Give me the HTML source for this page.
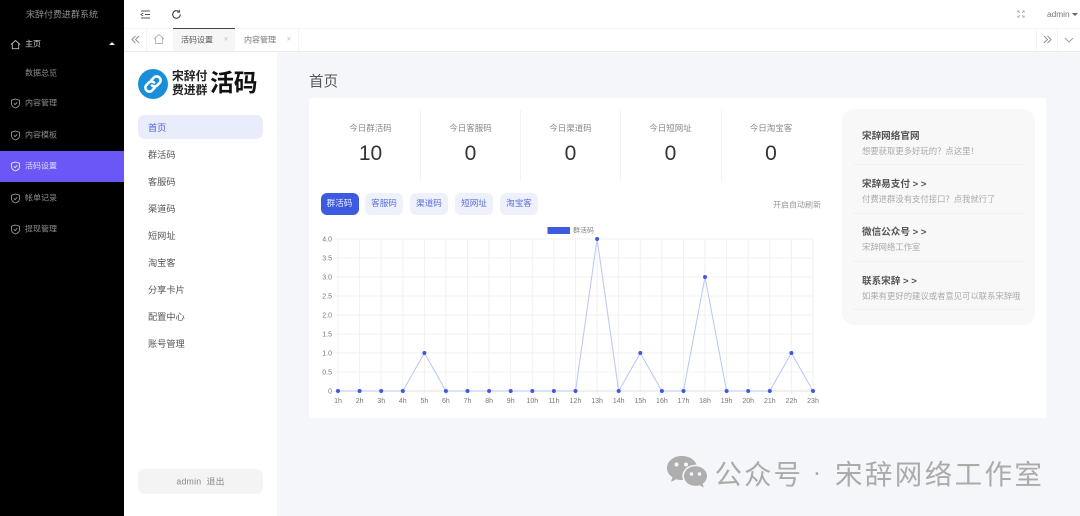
<!DOCTYPE html>
<html lang="zh-CN">
<head>
<meta charset="utf-8">
<title>宋辞付费进群系统</title>
<style>
*{box-sizing:border-box;margin:0;padding:0}
html,body{width:1080px;height:516px;overflow:hidden;background:#f5f6f9}
body{position:relative;font-family:"Liberation Sans","Noto Sans CJK SC",sans-serif}
#soft{position:absolute;left:0;top:0;width:1080px;height:516px;filter:blur(.35px)}
.a{position:absolute;white-space:nowrap}
.c{position:absolute;white-space:nowrap;transform:translate(-50%,-50%)}
.l{position:absolute;white-space:nowrap;transform:translateY(-50%)}
.side{position:absolute;left:0;top:0;width:124px;height:516px;background:#000}
.si{font-size:8px;color:#8c8c8c}
.mi{font-size:9.2px;color:#555;left:148px}
.sl{font-size:8.5px;color:#8a8a8a}
.num{font-size:21px;color:#333}
.dv{position:absolute;top:110px;width:1px;height:71px;background:#f3f3f4}
.btn{position:absolute;top:193px;height:22px;width:38px;border-radius:6px;background:#eef0fc;color:#5d70d8;font-size:8.6px;line-height:21.5px;text-align:center}
.pt{font-size:9.6px;color:#555;font-weight:bold;left:862px}
.ps{font-size:8.35px;color:#aaa;left:862px}
.pd{position:absolute;left:853px;width:171px;height:1px;background:#f1f1f1}
svg{position:absolute;overflow:visible}
</style>
</head>
<body>
<div id="soft">
<div class="side"></div>
<div class="c" style="left:62px;top:14px;font-size:9px;color:#8f8f8f">宋辞付费进群系统</div>

<svg style="left:10px;top:39px" width="11" height="11" viewBox="0 0 11 11" fill="none" stroke="#bbb" stroke-width=".9"><path d="M1 5.5L5.5 1.5L10 5.5M2.3 4.6V9.7H8.7V4.6"/></svg>
<div class="l si" style="left:25px;top:44px;color:#c8c8c8">主页</div>
<div class="a" style="left:109px;top:42px;border-left:3.5px solid transparent;border-right:3.5px solid transparent;border-bottom:3.5px solid #eee"></div>
<div class="l si" style="left:25px;top:73px">数据总览</div>

<div class="a" style="left:0;top:151px;width:124px;height:31px;background:#6a57f5"></div>

<svg style="left:10px;top:98px" width="11" height="11" viewBox="0 0 11 11" fill="none" stroke="#999" stroke-width=".9"><path d="M5.5 1L9.5 2.2V5.5C9.5 8 7.5 9.4 5.500 10C3.5 9.4 1.5 8 1.5 5.5V2.2ZM3.8 5.4L5.1 6.6L7.3 4.3"/></svg>
<div class="l si" style="left:25px;top:103px">内容管理</div>
<svg style="left:10px;top:130px" width="11" height="11" viewBox="0 0 11 11" fill="none" stroke="#999" stroke-width=".9"><path d="M5.5 1L9.5 2.2V5.5C9.5 8 7.5 9.4 5.5 10C3.5 9.4 1.5 8 1.5 5.5V2.2ZM3.8 5.4L5.1 6.6L7.3 4.3"/></svg>
<div class="l si" style="left:25px;top:135px">内容模板</div>
<svg style="left:10px;top:161px" width="11" height="11" viewBox="0 0 11 11" fill="none" stroke="#eee" stroke-width=".9"><path d="M5.5 1L9.5 2.2V5.5C9.5 8 7.5 9.4 5.5 10C3.5 9.4 1.5 8 1.5 5.5V2.2ZM3.8 5.4L5.1 6.6L7.3 4.3"/></svg>
<div class="l si" style="left:25px;top:166px;color:#e4e0ff">活码设置</div>
<svg style="left:10px;top:193px" width="11" height="11" viewBox="0 0 11 11" fill="none" stroke="#999" stroke-width=".9"><path d="M5.5 1L9.5 2.2V5.5C9.5 8 7.5 9.4 5.5 10C3.5 9.4 1.5 8 1.5 5.5V2.2ZM3.8 5.4L5.1 6.6L7.3 4.3"/></svg>
<div class="l si" style="left:25px;top:198px">帐单记录</div>
<svg style="left:10px;top:224px" width="11" height="11" viewBox="0 0 11 11" fill="none" stroke="#999" stroke-width=".9"><path d="M5.5 1L9.5 2.2V5.5C9.5 8 7.5 9.4 5.5 10C3.5 9.4 1.5 8 1.5 5.5V2.2ZM3.8 5.4L5.1 6.6L7.3 4.3"/></svg>
<div class="l si" style="left:25px;top:229px">提现管理</div>

<!-- top bar -->
<div class="a" style="left:124px;top:0;width:956px;height:52px;background:#fff;border-bottom:1px solid #e9e9ea"></div>
<div class="a" style="left:124px;top:27.5px;width:956px;height:1px;background:#f6f6f6"></div>
<svg style="left:140px;top:9px" width="11" height="11" viewBox="0 0 11 11" fill="none" stroke="#555" stroke-width=".9"><path d="M1 2H10M5 5.5H10M1 9H10M3.2 4L1 5.5L3.2 7"/></svg>
<svg style="left:171px;top:9px" width="11" height="11" viewBox="0 0 11 11" fill="none" stroke="#444" stroke-width="1.1"><path d="M9.3 5.5A3.8 3.8 0 1 1 8 2.6"/><path d="M8.6 .8V3.2H6.2" stroke-width=".9"/></svg>
<svg style="left:1016.5px;top:10px" width="8" height="8" viewBox="0 0 10 10" fill="none" stroke="#aaa" stroke-width="1"><path d="M1 3V1H3M7 1H9V3M9 7V9H7M3 9H1V7M1 1L3.5 3.5M9 1L6.5 3.5M9 9L6.5 6.5M1 9L3.5 6.5"/></svg>
<div class="l" style="left:1047px;top:14px;font-size:8.3px;color:#777">admin</div>
<div class="a" style="left:1072px;top:12.5px;border-left:3.5px solid transparent;border-right:3.5px solid transparent;border-top:3.5px solid #666"></div>

<!-- tabs -->
<svg style="left:130.500px;top:35px" width="9" height="9" viewBox="0 0 10 10" fill="none" stroke="#888" stroke-width="1"><path d="M5 1L1 5L5 9M9 1L5 5L9 9"/></svg>
<div class="a" style="left:146px;top:28px;width:1px;height:23px;background:#f3f3f3"></div>
<svg style="left:153px;top:33px" width="12" height="12" viewBox="0 0 12 12" fill="none" stroke="#b5b5b5" stroke-width=".9"><path d="M1 6L6 1.5L11 6M2.5 5V10.5H9.5V5"/></svg>
<div class="a" style="left:173px;top:28px;width:62px;height:23px;background:#f6f6f6;border-top:1.5px solid #444"></div>
<div class="l" style="left:181px;top:39.5px;font-size:8px;color:#555">活码设置</div>
<div class="c" style="left:226px;top:39px;font-size:8px;color:#c4c4c4">×</div>
<div class="l" style="left:244px;top:39.5px;font-size:8px;color:#777">内容管理</div>
<div class="c" style="left:289px;top:39px;font-size:8px;color:#c4c4c4">×</div>
<div class="a" style="left:298px;top:28px;width:1px;height:23px;background:#f3f3f3"></div>
<div class="a" style="left:1036px;top:28px;width:1px;height:23px;background:#f3f3f3"></div>
<div class="a" style="left:1057px;top:28px;width:1px;height:23px;background:#f3f3f3"></div>
<svg style="left:1042.500px;top:35px" width="9" height="9" viewBox="0 0 10 10" fill="none" stroke="#888" stroke-width="1"><path d="M1 1L5 5L1 9M5 1L9 5L5 9"/></svg>
<svg style="left:1064px;top:35.500px" width="10" height="8" viewBox="0 0 10 8" fill="none" stroke="#999" stroke-width=".9"><path d="M1 2L5 6L9 2"/></svg>

<!-- left menu -->
<div class="a" style="left:124px;top:52px;width:153px;height:464px;background:#fff"></div>
<svg style="left:138px;top:68.500px" width="30" height="30" viewBox="0 0 30 30"><circle cx="15" cy="15" r="15" fill="#1a8fd9"/><g fill="none" stroke="#fff" stroke-width="2.6" stroke-linecap="round"><path d="M13 11.5L16.5 8A4 4 0 0 1 22 13.5L19 16.5A4 4 0 0 1 14 16.5"/><path d="M17 18.5L13.5 22A4 4 0 0 1 8 16.5L11 13.5A4 4 0 0 1 16 13.5"/></g></svg>
<div class="l" style="left:172px;top:77px;font-size:11.800px;color:#222;font-weight:bold;line-height:1">宋辞付</div>
<div class="l" style="left:172px;top:91px;font-size:11.800px;color:#222;font-weight:bold;line-height:1">费进群</div>
<div class="l" style="left:210px;top:84px;font-size:23.800px;color:#111;font-weight:bold;line-height:1">活码</div>

<div class="a" style="left:138px;top:115px;width:125px;height:24px;border-radius:7px;background:#e9ecfb"></div>
<div class="l mi" style="top:126.500px;color:#4f62e0">首页</div>
<div class="l mi" style="top:153.500px">群活码</div>
<div class="l mi" style="top:180.500px">客服码</div>
<div class="l mi" style="top:207.500px">渠道码</div>
<div class="l mi" style="top:234.500px">短网址</div>
<div class="l mi" style="top:261.500px">淘宝客</div>
<div class="l mi" style="top:288.500px">分享卡片</div>
<div class="l mi" style="top:315.500px">配置中心</div>
<div class="l mi" style="top:342.500px">账号管理</div>
<div class="a" style="left:138px;top:469px;width:125px;height:25px;border-radius:7px;background:#f4f4f4"></div>
<div class="c" style="left:200.500px;top:481px;font-size:8.800px;color:#888;letter-spacing:.2px">admin&nbsp; 退出</div>

<!-- main -->
<div class="l" style="left:309px;top:81px;font-size:14.500px;color:#555">首页</div>
<div class="a" style="left:309px;top:98px;width:737px;height:320px;background:#fff;border-radius:2px"></div>

<div class="c sl" style="left:370.500px;top:128px">今日群活码</div>
<div class="c num" style="left:370.500px;top:154px">10</div>
<div class="dv" style="left:420px"></div>
<div class="c sl" style="left:470.500px;top:128px">今日客服码</div>
<div class="c num" style="left:470.500px;top:154px">0</div>
<div class="dv" style="left:520px"></div>
<div class="c sl" style="left:570.500px;top:128px">今日渠道码</div>
<div class="c num" style="left:570.500px;top:154px">0</div>
<div class="dv" style="left:620px"></div>
<div class="c sl" style="left:670.500px;top:128px">今日短网址</div>
<div class="c num" style="left:670.500px;top:154px">0</div>
<div class="dv" style="left:720.500px"></div>
<div class="c sl" style="left:771px;top:128px">今日淘宝客</div>
<div class="c num" style="left:771px;top:154px">0</div>

<div class="btn" style="left:320.500px;background:#3c5be0;color:#e6eaff">群活码</div>
<div class="btn" style="left:365px">客服码</div>
<div class="btn" style="left:410px">渠道码</div>
<div class="btn" style="left:455px">短网址</div>
<div class="btn" style="left:500px">淘宝客</div>
<div class="l" style="left:773px;top:205px;font-size:8px;color:#999">开启自动刷新</div>

<!-- chart -->
<svg style="left:0;top:0" width="1080" height="516" viewBox="0 0 1080 516">
<rect x="547.500" y="227" width="22.500" height="7" fill="#3c5be0"/>
<text x="573" y="232.500" font-size="7px" fill="#888" font-family="'Liberation Sans','Noto Sans CJK SC',sans-serif">群活码</text>
<g stroke="#f1f1f2" stroke-width="1" fill="none">
<path d="M334 239H813M334 258H813M334 277H813M334 296H813M334 315H813M334 334H813M334 353H813M334 372H813"/>
<path d="M338 239V395M359.600 239V395M381.200 239V395M402.800 239V395M424.400 239V395M445.900 239V395M467.500 239V395M489.100 239V395M510.700 239V395M532.300 239V395M553.900 239V395M575.500 239V395M597.100 239V395M618.700 239V395M640.300 239V395M661.900 239V395M683.500 239V395M705 239V395M726.600 239V395M748.200 239V395M769.800 239V395M791.400 239V395M813 239V395"/>
</g>
<path d="M334 391H813" stroke="#e2e2e4"/>
<path d="M338 391 359.600 391 381.200 391 402.800 391 424.400 353 445.900 391 467.500 391 489.100 391 510.700 391 532.300 391 553.900 391 575.500 391 597.100 239 618.700 391 640.300 353 661.900 391 683.500 391 705 277 726.600 391 748.200 391 769.800 391 791.400 353 813 391" fill="none" stroke="#b9c6f3" stroke-width="1"/>
<g fill="#3c5be0">
<circle cx="338" cy="391" r="2"/><circle cx="359.600" cy="391" r="2"/><circle cx="381.200" cy="391" r="2"/><circle cx="402.800" cy="391" r="2"/><circle cx="424.400" cy="353" r="2"/><circle cx="445.900" cy="391" r="2"/><circle cx="467.500" cy="391" r="2"/><circle cx="489.100" cy="391" r="2"/><circle cx="510.700" cy="391" r="2"/><circle cx="532.300" cy="391" r="2"/><circle cx="553.900" cy="391" r="2"/><circle cx="575.500" cy="391" r="2"/><circle cx="597.100" cy="239" r="2"/><circle cx="618.700" cy="391" r="2"/><circle cx="640.300" cy="353" r="2"/><circle cx="661.900" cy="391" r="2"/><circle cx="683.500" cy="391" r="2"/><circle cx="705" cy="277" r="2"/><circle cx="726.600" cy="391" r="2"/><circle cx="748.200" cy="391" r="2"/><circle cx="769.800" cy="391" r="2"/><circle cx="791.400" cy="353" r="2"/><circle cx="813" cy="391" r="2"/>
</g>
<g font-size="7px" fill="#777" font-family="'Liberation Sans',sans-serif" text-anchor="end">
<text x="332" y="241.500">4.0</text><text x="332" y="260.500">3.5</text><text x="332" y="279.500">3.0</text><text x="332" y="298.500">2.5</text><text x="332" y="317.500">2.0</text><text x="332" y="336.500">1.5</text><text x="332" y="355.500">1.0</text><text x="332" y="374.500">0.5</text><text x="332" y="393.500">0</text>
</g>
<g font-size="7px" fill="#777" font-family="'Liberation Sans',sans-serif" text-anchor="middle">
<text x="338" y="403">1h</text><text x="359.600" y="403">2h</text><text x="381.200" y="403">3h</text><text x="402.800" y="403">4h</text><text x="424.400" y="403">5h</text><text x="445.900" y="403">6h</text><text x="467.500" y="403">7h</text><text x="489.100" y="403">8h</text><text x="510.700" y="403">9h</text><text x="532.300" y="403">10h</text><text x="553.900" y="403">11h</text><text x="575.500" y="403">12h</text><text x="597.100" y="403">13h</text><text x="618.700" y="403">14h</text><text x="640.300" y="403">15h</text><text x="661.900" y="403">16h</text><text x="683.500" y="403">17h</text><text x="705" y="403">18h</text><text x="726.600" y="403">19h</text><text x="748.200" y="403">20h</text><text x="769.800" y="403">21h</text><text x="791.400" y="403">22h</text><text x="813" y="403">23h</text>
</g>
</svg>

<!-- right panel -->
<div class="a" style="left:842px;top:109px;width:193px;height:216px;border-radius:12px;background:#f8f8f8"></div>
<div class="l pt" style="top:134.500px">宋辞网络官网</div>
<div class="l ps" style="top:150.500px">想要获取更多好玩的？点这里！</div>
<div class="pd" style="top:164px"></div>
<div class="l pt" style="top:182.500px">宋辞易支付 &gt; &gt;</div>
<div class="l ps" style="top:198.500px">付费进群没有支付接口？点我就行了</div>
<div class="pd" style="top:213px"></div>
<div class="l pt" style="top:231px">微信公众号 &gt; &gt;</div>
<div class="l ps" style="top:247px">宋辞网络工作室</div>
<div class="pd" style="top:261px"></div>
<div class="l pt" style="top:279.500px">联系宋辞 &gt; &gt;</div>
<div class="l ps" style="top:295.500px">如果有更好的建议或者意见可以联系宋辞哦</div>
<div class="pd" style="top:309px"></div>
</div>

<!-- watermark -->
<svg style="left:665.500px;top:453.500px" width="42" height="36" viewBox="0 0 42 36">
<path d="M15.500 2C7.500 2 1 7.300 1 14C1 17.800 3.100 21 6.400 23.300L5 28L10.300 25.200C12 25.700 13.700 26 15.500 26C16 26 16.500 26 17 25.900C16.600 24.700 16.400 23.400 16.400 22C16.400 15.700 22.300 10.700 29.800 10.700C30 10.700 30.300 10.700 30.500 10.700C29 5.600 22.800 2 15.500 2Z" fill="#aeaeae"/>
<path d="M41 22C41 16.500 35.700 12.200 29.500 12.200C22.900 12.200 18 16.500 18 22C18 27.500 22.900 31.800 29.500 31.800C30.900 31.800 32.200 31.600 33.500 31.200L37.800 33.600L36.700 29.800C39.300 27.900 41 25.200 41 22Z" fill="#aeaeae"/>
<circle cx="10.500" cy="10.500" r="2" fill="#f5f6f9"/><circle cx="20" cy="10.500" r="2" fill="#f5f6f9"/>
<circle cx="25.500" cy="20" r="1.700" fill="#f5f6f9"/><circle cx="33.500" cy="20" r="1.700" fill="#f5f6f9"/>
</svg>
<div class="l" style="left:714.500px;top:471.500px;font-size:27.500px;letter-spacing:2px;color:#ababab">公众号</div>
<div class="c" style="left:817px;top:471.500px;font-size:26px;color:#ababab">·</div>
<div class="l" style="left:835px;top:471.500px;font-size:27.500px;letter-spacing:2.400px;color:#ababab">宋辞网络工作室</div>
</body>
</html>
